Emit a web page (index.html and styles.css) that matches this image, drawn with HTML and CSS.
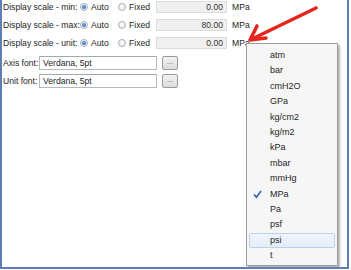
FILE: index.html
```html
<!DOCTYPE html>
<html lang="en">
<head>
    <meta charset="UTF-8">
    <title>Display scale</title>
    <link rel="stylesheet" href="styles.css">
</head>
<body>

<div class="frame">
    <div class="panel">
        <div class="row">
            <span class="label">Display scale - min:</span>
            <span class="radio on"></span><span class="opt">Auto</span>
            <span class="radio"></span><span class="opt">Fixed</span>
            <span class="num">0.00</span>
            <span class="unit">MPa</span>
        </div>
        <div class="row">
            <span class="label">Display scale - max:</span>
            <span class="radio on"></span><span class="opt">Auto</span>
            <span class="radio"></span><span class="opt">Fixed</span>
            <span class="num">80.00</span>
            <span class="unit">MPa</span>
        </div>
        <div class="row">
            <span class="label">Display scale - unit:</span>
            <span class="radio on"></span><span class="opt">Auto</span>
            <span class="radio"></span><span class="opt">Fixed</span>
            <span class="num">0.00</span>
            <span class="unit">MPa</span>
        </div>
        <div class="row font-row">
            <span class="flabel">Axis font:</span>
            <span class="field">Verdana, 5pt</span>
            <span class="btn">...</span>
        </div>
        <div class="row font-row">
            <span class="flabel">Unit font:</span>
            <span class="field">Verdana, 5pt</span>
            <span class="btn">...</span>
        </div>
    </div>

    <!-- red annotation arrow -->
    <svg class="arrow" width="351" height="60" viewBox="0 0 351 60">
        <path d="M316 8 L252 39" stroke="#e4261f" stroke-width="3.6" fill="none" stroke-linecap="round"/>
        <path d="M257 26 L250 40 L266 38" stroke="#e4261f" stroke-width="3.6" fill="none" stroke-linecap="round" stroke-linejoin="round"/>
    </svg>

    <ul class="menu">
        <li>atm</li>
        <li>bar</li>
        <li>cmH2O</li>
        <li>GPa</li>
        <li>kg/cm2</li>
        <li>kg/m2</li>
        <li>kPa</li>
        <li>mbar</li>
        <li>mmHg</li>
        <li class="checked">
            <svg class="check" width="9" height="9" viewBox="0 0 9 9">
                <path d="M1 4.5 L3.4 7.2 L8 1" stroke="#2b5ea8" stroke-width="1.6" fill="none"/>
            </svg>
            MPa
        </li>
        <li>Pa</li>
        <li>psf</li>
        <li class="hover">psi</li>
        <li>t</li>
    </ul>
</div>

</body>
</html>
```

FILE: styles.css
```css
body {
    margin: 0;
    background-color: #ffffff;
    font-family: "Liberation Sans", Arial, sans-serif;
    font-size: 8.6px;
    color: #1e1e1e;
}
.frame {
    position: relative;
    width: 349px;
    height: 269px;
    box-sizing: border-box;
    border-left: 2px solid #5d7fb3;
    border-right: 2px solid #5d7fb3;
    border-bottom: 2px solid #5d7fb3;
    background-color: #ffffff;
    overflow: hidden;
}
.panel {
    padding-left: 1px;
    height: 100%;
    box-sizing: border-box;
}
.row {
    display: flex;
    align-items: center;
    height: 14px;
    margin-top: 4px;
}
.row:first-child {
    margin-top: 0;
}
.label {
    width: 77px;
    white-space: nowrap;
}
.radio {
    width: 8px;
    height: 8px;
    box-sizing: border-box;
    border-radius: 50%;
    border: 1px solid #a9aeb6;
    background: radial-gradient(circle at 50% 40%, #ffffff 0%, #e3e6ea 100%);
    margin-right: 3px;
    position: relative;
}
.radio.on:after {
    content: '';
    position: absolute;
    left: 1px;
    top: 1px;
    width: 4px;
    height: 4px;
    border-radius: 50%;
    background: radial-gradient(circle at 40% 35%, #6fa6ea 0%, #1f5aa8 100%);
}
.opt {
    width: 27px;
}
.num {
    width: 71px;
    height: 12px;
    box-sizing: border-box;
    border: 1px solid #dcdcdc;
    background-color: #f0f0f0;
    text-align: right;
    padding-right: 3px;
    line-height: 10px;
    color: #333333;
}
.unit {
    margin-left: 5px;
}
.font-row {
    margin-top: 6px;
}
.font-row + .font-row {
    margin-top: 4px;
}
.flabel {
    width: 36px;
    white-space: nowrap;
}
.field {
    width: 118px;
    height: 14px;
    box-sizing: border-box;
    border: 1px solid #b5b8bf;
    border-top-color: #a5a8ae;
    background-color: #ffffff;
    padding-left: 3px;
    line-height: 12px;
}
.btn {
    margin-left: 5px;
    width: 16px;
    height: 14px;
    box-sizing: border-box;
    border: 1px solid #9a9a9a;
    border-radius: 2px;
    background: linear-gradient(#f2f2f2, #dcdcdc);
    text-align: center;
    line-height: 9px;
    font-size: 7px;
    color: #555555;
}
.arrow {
    position: absolute;
    left: -2px;
    top: 0;
}
.menu {
    position: absolute;
    left: 244px;
    top: 43px;
    width: 92px;
    height: 223px;
    box-sizing: border-box;
    margin: 0;
    padding: 4px 2px 3px 2px;
    list-style: none;
    background-color: #f6f6f6;
    border: 1px solid #9c9c9c;
    box-shadow: 2px 2px 2px rgba(0, 0, 0, 0.3);
    font-size: 9px;
}
.menu li {
    position: relative;
    height: 15.4px;
    line-height: 15.4px;
    padding-left: 21px;
    box-sizing: border-box;
}
.menu li.hover {
    background: linear-gradient(#f0f5fc, #e3ecf8);
    border: 1px solid #b8d2f0;
    border-radius: 2px;
    line-height: 13.4px;
    padding-left: 20px;
}
.check {
    position: absolute;
    left: 4px;
    top: 3px;
}
```
